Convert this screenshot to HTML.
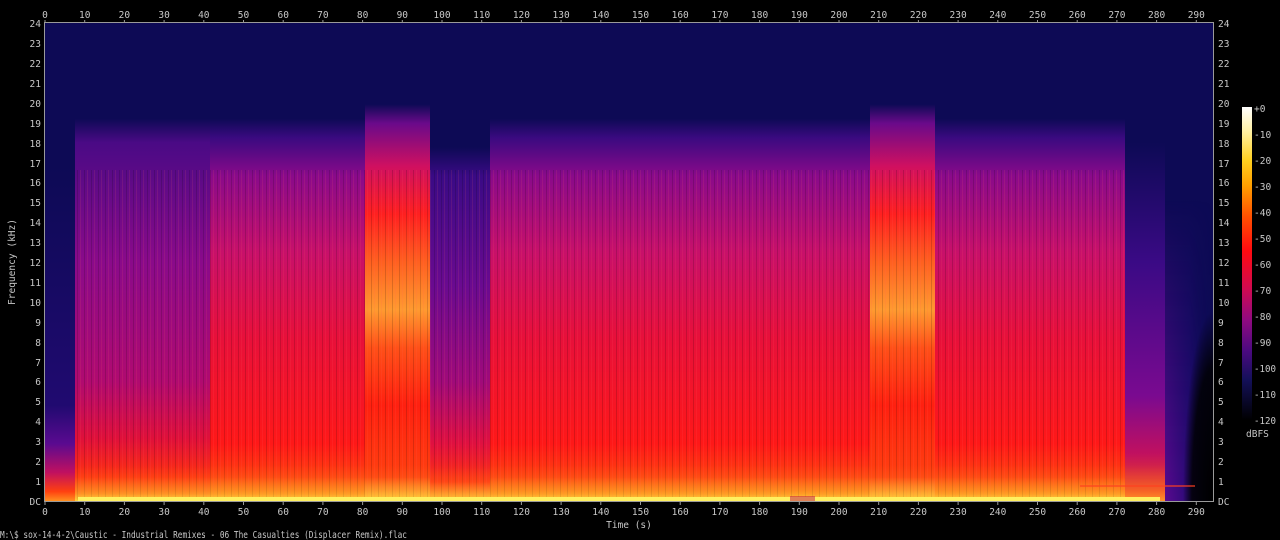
<!DOCTYPE html>
<html><head><meta charset="utf-8"><style>
html,body{margin:0;padding:0;background:#000;width:1280px;height:540px;overflow:hidden}
svg{display:block}
text{font-family:"DejaVu Sans Mono","Liberation Mono",monospace;font-size:9.5px;fill:#c8c8c8}
</style></head><body>
<svg width="1280" height="540" viewBox="0 0 1280 540" xmlns="http://www.w3.org/2000/svg">
<defs>
<linearGradient id="gA" gradientUnits="userSpaceOnUse" x1="0" y1="23" x2="0" y2="501">
<stop offset="0.2" stop-color="#0d0a55"/><stop offset="0.24" stop-color="#3a0a80"/><stop offset="0.32" stop-color="#8a0a8a"/><stop offset="0.48" stop-color="#c8106a"/><stop offset="0.66" stop-color="#e8103a"/><stop offset="0.88" stop-color="#ff1818"/><stop offset="0.95" stop-color="#ff4010"/><stop offset="0.985" stop-color="#ff9018"/><stop offset="1" stop-color="#ffd838"/></linearGradient>
<linearGradient id="gM" gradientUnits="userSpaceOnUse" x1="0" y1="23" x2="0" y2="501">
<stop offset="0.2" stop-color="#0d0a55"/><stop offset="0.25" stop-color="#4a0a85"/><stop offset="0.5" stop-color="#8a0a8a"/><stop offset="0.75" stop-color="#b00a70"/><stop offset="0.87" stop-color="#e0103a"/><stop offset="0.95" stop-color="#ff3010"/><stop offset="0.985" stop-color="#ff8018"/><stop offset="1" stop-color="#ffd838"/></linearGradient>
<linearGradient id="gB" gradientUnits="userSpaceOnUse" x1="0" y1="23" x2="0" y2="501">
<stop offset="0.17" stop-color="#0d0a55"/><stop offset="0.21" stop-color="#6a0a8a"/><stop offset="0.3" stop-color="#d01060"/><stop offset="0.4" stop-color="#ff2020"/><stop offset="0.5" stop-color="#ff6020"/><stop offset="0.6" stop-color="#ff9a30"/><stop offset="0.68" stop-color="#ff5018"/><stop offset="0.8" stop-color="#ff2010"/><stop offset="0.95" stop-color="#ff4010"/><stop offset="1" stop-color="#ffd838"/></linearGradient>
<linearGradient id="gP" gradientUnits="userSpaceOnUse" x1="0" y1="23" x2="0" y2="501">
<stop offset="0.26" stop-color="#0d0a55"/><stop offset="0.32" stop-color="#3a0a85"/><stop offset="0.55" stop-color="#6a0a90"/><stop offset="0.75" stop-color="#a00a7a"/><stop offset="0.88" stop-color="#e01040"/><stop offset="0.96" stop-color="#ff3010"/><stop offset="1" stop-color="#ffc830"/></linearGradient>
<linearGradient id="gD" gradientUnits="userSpaceOnUse" x1="0" y1="23" x2="0" y2="501">
<stop offset="0.3" stop-color="#0d0a55"/><stop offset="0.8" stop-color="#200a70"/><stop offset="0.88" stop-color="#5a0a90"/><stop offset="0.94" stop-color="#c01060"/><stop offset="0.98" stop-color="#ff4010"/><stop offset="1" stop-color="#ff9020"/></linearGradient>
<linearGradient id="gE" gradientUnits="userSpaceOnUse" x1="0" y1="23" x2="0" y2="501">
<stop offset="0.25" stop-color="#0d0a55"/><stop offset="0.5" stop-color="#3a0a85"/><stop offset="0.78" stop-color="#7a0a90"/><stop offset="0.9" stop-color="#c01060"/><stop offset="1" stop-color="#ff5010"/></linearGradient>
<linearGradient id="gT" x1="0" y1="0" x2="1" y2="0">
<stop offset="0" stop-color="#5a0a90"/><stop offset="0.5" stop-color="#2a0a78"/><stop offset="1" stop-color="#0d0a55" stop-opacity="0"/></linearGradient>
<linearGradient id="gTv" x1="0" y1="0" x2="0" y2="1">
<stop offset="0" stop-color="#fff" stop-opacity="0"/><stop offset="1" stop-color="#fff"/></linearGradient>
<mask id="mT"><rect x="1165" y="200" width="48" height="301" fill="url(#gTv)"/></mask>
<radialGradient id="gBlk" cx="1213" cy="501" r="1" gradientUnits="userSpaceOnUse" gradientTransform="translate(1213 501) scale(30 190) translate(-1213 -501)">
<stop offset="0" stop-color="#000"/><stop offset="0.7" stop-color="#000" stop-opacity="0.85"/><stop offset="1" stop-color="#000" stop-opacity="0"/></radialGradient>
<linearGradient id="cb" x1="0" y1="0" x2="0" y2="1">
<stop offset="0" stop-color="#ffffff"/><stop offset="0.08" stop-color="#fff0a0"/><stop offset="0.17" stop-color="#ffd020"/><stop offset="0.25" stop-color="#ffa000"/><stop offset="0.35" stop-color="#ff5000"/><stop offset="0.46" stop-color="#ff0a10"/><stop offset="0.58" stop-color="#d00a50"/><stop offset="0.68" stop-color="#900a80"/><stop offset="0.78" stop-color="#4a0a80"/><stop offset="0.87" stop-color="#14105a"/><stop offset="1" stop-color="#000"/></linearGradient>
<pattern id="str" width="7" height="10" patternUnits="userSpaceOnUse">
<rect x="0" y="0" width="1" height="10" fill="#000" opacity="0.15"/><rect x="3" y="0" width="1" height="10" fill="#ff6060" opacity="0.12"/></pattern>
<linearGradient id="yl" x1="0" y1="0" x2="0" y2="1"><stop offset="0" stop-color="#ff8020" stop-opacity="0"/><stop offset="0.7" stop-color="#ffa030" stop-opacity="0.6"/><stop offset="1" stop-color="#ffd040"/></linearGradient>
</defs>
<rect x="45" y="23" width="1168" height="478" fill="#0d0a55"/>
<rect x="45" y="23" width="30" height="478" fill="url(#gD)"/>
<rect x="75" y="23" width="135" height="478" fill="url(#gM)"/>
<rect x="210" y="23" width="155" height="478" fill="url(#gA)"/>
<rect x="365" y="23" width="65" height="478" fill="url(#gB)"/>
<rect x="430" y="23" width="60" height="478" fill="url(#gP)"/>
<rect x="490" y="23" width="220" height="478" fill="url(#gA)"/>
<rect x="710" y="23" width="105" height="478" fill="url(#gA)"/>
<rect x="815" y="23" width="55" height="478" fill="url(#gA)"/>
<rect x="870" y="23" width="65" height="478" fill="url(#gB)"/>
<rect x="935" y="23" width="190" height="478" fill="url(#gA)"/>
<rect x="1125" y="23" width="40" height="478" fill="url(#gE)"/>
<rect x="1165" y="200" width="48" height="301" fill="url(#gT)" mask="url(#mT)"/>
<rect x="1170" y="300" width="43" height="201" fill="url(#gBlk)"/>
<rect x="75" y="170" width="1050" height="330" fill="url(#str)"/>
<rect x="75" y="465" width="1090" height="36" fill="url(#yl)" opacity="0.55"/>
<rect x="78" y="497" width="1082" height="4" fill="#fff060"/>
<rect x="790" y="496" width="25" height="5" fill="#c0104a" opacity="0.5"/>
<rect x="1080" y="485" width="115" height="2" fill="#ff4020" opacity="0.6"/>
<rect x="44.5" y="22.5" width="1169" height="479" fill="none" stroke="#9a9a9a" stroke-width="1"/>
<g stroke="#9a9a9a" stroke-width="1">
<path d="M45 20v3M84.7 20v3M124.4 20v3M164.1 20v3M203.8 20v3M243.5 20v3M283.2 20v3M322.9 20v3M362.6 20v3M402.3 20v3M442 20v3M481.7 20v3M521.4 20v3M561.1 20v3M600.8 20v3M640.5 20v3M680.2 20v3M719.9 20v3M759.6 20v3M799.3 20v3M839 20v3M878.7 20v3M918.4 20v3M958.1 20v3M997.8 20v3M1037.5 20v3M1077.2 20v3M1116.9 20v3M1156.6 20v3M1196.3 20v3"/>
<path d="M45 502v3M84.7 502v3M124.4 502v3M164.1 502v3M203.8 502v3M243.5 502v3M283.2 502v3M322.9 502v3M362.6 502v3M402.3 502v3M442 502v3M481.7 502v3M521.4 502v3M561.1 502v3M600.8 502v3M640.5 502v3M680.2 502v3M719.9 502v3M759.6 502v3M799.3 502v3M839 502v3M878.7 502v3M918.4 502v3M958.1 502v3M997.8 502v3M1037.5 502v3M1077.2 502v3M1116.9 502v3M1156.6 502v3M1196.3 502v3"/>
</g>
<g text-anchor="middle">
<text x="45" y="18">0</text><text x="84.7" y="18">10</text><text x="124.4" y="18">20</text><text x="164.1" y="18">30</text><text x="203.8" y="18">40</text><text x="243.5" y="18">50</text><text x="283.2" y="18">60</text><text x="322.9" y="18">70</text><text x="362.6" y="18">80</text><text x="402.3" y="18">90</text><text x="442" y="18">100</text><text x="481.7" y="18">110</text><text x="521.4" y="18">120</text><text x="561.1" y="18">130</text><text x="600.8" y="18">140</text><text x="640.5" y="18">150</text><text x="680.2" y="18">160</text><text x="719.9" y="18">170</text><text x="759.6" y="18">180</text><text x="799.3" y="18">190</text><text x="839" y="18">200</text><text x="878.7" y="18">210</text><text x="918.4" y="18">220</text><text x="958.1" y="18">230</text><text x="997.8" y="18">240</text><text x="1037.5" y="18">250</text><text x="1077.2" y="18">260</text><text x="1116.9" y="18">270</text><text x="1156.6" y="18">280</text><text x="1196.3" y="18">290</text>
</g>
<g text-anchor="middle">
<text x="45" y="515">0</text><text x="84.7" y="515">10</text><text x="124.4" y="515">20</text><text x="164.1" y="515">30</text><text x="203.8" y="515">40</text><text x="243.5" y="515">50</text><text x="283.2" y="515">60</text><text x="322.9" y="515">70</text><text x="362.6" y="515">80</text><text x="402.3" y="515">90</text><text x="442" y="515">100</text><text x="481.7" y="515">110</text><text x="521.4" y="515">120</text><text x="561.1" y="515">130</text><text x="600.8" y="515">140</text><text x="640.5" y="515">150</text><text x="680.2" y="515">160</text><text x="719.9" y="515">170</text><text x="759.6" y="515">180</text><text x="799.3" y="515">190</text><text x="839" y="515">200</text><text x="878.7" y="515">210</text><text x="918.4" y="515">220</text><text x="958.1" y="515">230</text><text x="997.8" y="515">240</text><text x="1037.5" y="515">250</text><text x="1077.2" y="515">260</text><text x="1116.9" y="515">270</text><text x="1156.6" y="515">280</text><text x="1196.3" y="515">290</text>
<text x="629" y="528">Time (s)</text>
</g>
<g text-anchor="end">
<text x="41" y="505">DC</text><text x="41" y="485">1</text><text x="41" y="465">2</text><text x="41" y="445">3</text><text x="41" y="425">4</text><text x="41" y="405">5</text><text x="41" y="385">6</text><text x="41" y="366">7</text><text x="41" y="346">8</text><text x="41" y="326">9</text><text x="41" y="306">10</text><text x="41" y="286">11</text><text x="41" y="266">12</text><text x="41" y="246">13</text><text x="41" y="226">14</text><text x="41" y="206">15</text><text x="41" y="186">16</text><text x="41" y="167">17</text><text x="41" y="147">18</text><text x="41" y="127">19</text><text x="41" y="107">20</text><text x="41" y="87">21</text><text x="41" y="67">22</text><text x="41" y="47">23</text><text x="41" y="27">24</text>
</g>
<g text-anchor="start">
<text x="1218" y="505">DC</text><text x="1218" y="485">1</text><text x="1218" y="465">2</text><text x="1218" y="445">3</text><text x="1218" y="425">4</text><text x="1218" y="405">5</text><text x="1218" y="385">6</text><text x="1218" y="366">7</text><text x="1218" y="346">8</text><text x="1218" y="326">9</text><text x="1218" y="306">10</text><text x="1218" y="286">11</text><text x="1218" y="266">12</text><text x="1218" y="246">13</text><text x="1218" y="226">14</text><text x="1218" y="206">15</text><text x="1218" y="186">16</text><text x="1218" y="167">17</text><text x="1218" y="147">18</text><text x="1218" y="127">19</text><text x="1218" y="107">20</text><text x="1218" y="87">21</text><text x="1218" y="67">22</text><text x="1218" y="47">23</text><text x="1218" y="27">24</text>
</g>
<text x="15" y="262" text-anchor="middle" transform="rotate(-90 15 262)" textLength="86" lengthAdjust="spacingAndGlyphs">Frequency (kHz)</text>
<rect x="1242" y="107" width="10" height="313" fill="url(#cb)"/>
<g text-anchor="start">
<text x="1254" y="112">+0</text><text x="1254" y="138">-10</text><text x="1254" y="164">-20</text><text x="1254" y="190">-30</text><text x="1254" y="216">-40</text><text x="1254" y="242">-50</text><text x="1254" y="268">-60</text><text x="1254" y="294">-70</text><text x="1254" y="320">-80</text><text x="1254" y="346">-90</text><text x="1254" y="372" textLength="22" lengthAdjust="spacingAndGlyphs">-100</text><text x="1254" y="398" textLength="22" lengthAdjust="spacingAndGlyphs">-110</text><text x="1254" y="424" textLength="22" lengthAdjust="spacingAndGlyphs">-120</text>
</g>
<text x="1246" y="437">dBFS</text>
<text x="0" y="538" textLength="407" lengthAdjust="spacingAndGlyphs">M:\$ sox-14-4-2\Caustic - Industrial Remixes - 06 The Casualties (Displacer Remix).flac</text>
</svg>
</body></html>
